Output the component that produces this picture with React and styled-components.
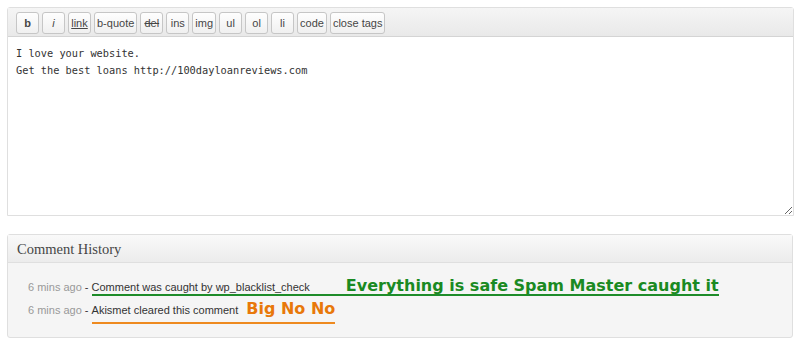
import React from "react";
import styled, { createGlobalStyle } from "styled-components";

const GlobalStyle = createGlobalStyle`
  body {
    margin: 0;
    background: #ffffff;
    font-family: "Liberation Sans", Arial, sans-serif;
  }
`;

const Page = styled.div`
  width: 800px;
  height: 345px;
  padding: 7px 6px 0 7px;
  box-sizing: border-box;
  display: flex;
  flex-direction: column;
  gap: 18px;
`;

const Editor = styled.div`
  border: 1px solid #dfdfdf;
  border-radius: 3px 3px 0 0;
  display: flex;
  flex-direction: column;
  background: #fff;
`;

const Toolbar = styled.div`
  height: 29px;
  box-sizing: border-box;
  padding: 4px 0 0 8px;
  display: flex;
  gap: 3px;
  background: linear-gradient(#f5f5f5, #e9e9e9);
  border-bottom: 1px solid #d4d4d4;
`;

const TagButton = styled.button`
  height: 22px;
  min-width: 23px;
  padding: 0 2px;
  box-sizing: border-box;
  border: 1px solid #c6c6c6;
  border-radius: 3px;
  background: linear-gradient(#fefefe, #f0f0f0);
  color: #464646;
  font-family: "Liberation Sans", Arial, sans-serif;
  font-size: 11px;
  font-weight: ${(p) => (p.$bold ? 700 : 400)};
  font-style: ${(p) => (p.$italic ? "italic" : "normal")};
  text-decoration: ${(p) => p.$deco || "none"};
  line-height: 20px;
  cursor: pointer;
`;

const TextArea = styled.textarea`
  height: 178px;
  box-sizing: border-box;
  border: none;
  outline: none;
  resize: vertical;
  padding: 8px 8px;
  margin: 0;
  font-family: "DejaVu Sans Mono", "Liberation Mono", monospace;
  font-size: 10.3px;
  line-height: 17px;
  color: #333;
  background: #fff;
`;

const HistoryBox = styled.div`
  width: 786px;
  height: 104px;
  box-sizing: border-box;
  border: 1px solid #dfdfdf;
  border-radius: 3px;
  background: #f5f5f5;
  display: flex;
  flex-direction: column;
`;

const HistoryHeader = styled.div`
  height: 28px;
  box-sizing: border-box;
  padding: 6px 0 0 9px;
  background: linear-gradient(#f9f9f9, #ececec);
  border-bottom: 1px solid #dfdfdf;
  font-family: "Liberation Serif", Georgia, serif;
  font-size: 14.5px;
  color: #464646;
`;

const HistoryList = styled.div`
  padding: 16px 0 0 20px;
  display: flex;
  flex-direction: column;
  gap: 6px;
`;

const Row = styled.div`
  display: flex;
  align-items: baseline;
  font-size: 11px;
  color: #333;
  white-space: nowrap;
`;

const Time = styled.span`
  color: #999;
`;

const Marked = styled.span`
  display: inline-flex;
  align-items: baseline;
  border-bottom: 2px solid ${(p) => p.$color};
  padding-bottom: ${(p) => p.$drop}px;
  margin-left: 3px;
`;

const Note = styled.span`
  margin-left: ${(p) => p.$gap}px;
  font-family: "DejaVu Sans", Verdana, sans-serif;
  font-weight: 700;
  font-size: ${(p) => p.$size}px;
  line-height: 13px;
  color: ${(p) => p.$color};
`;

const tags = [
  { label: "b", bold: true },
  { label: "i", italic: true },
  { label: "link", deco: "underline" },
  { label: "b-quote" },
  { label: "del", deco: "line-through" },
  { label: "ins" },
  { label: "img" },
  { label: "ul" },
  { label: "ol" },
  { label: "li" },
  { label: "code" },
  { label: "close tags" },
];

export default function App() {
  return (
    <>
      <GlobalStyle />
      <Page>
        <Editor>
          <Toolbar>
            {tags.map((t) => (
              <TagButton
                key={t.label}
                $bold={t.bold}
                $italic={t.italic}
                $deco={t.deco}
              >
                {t.label}
              </TagButton>
            ))}
          </Toolbar>
          <TextArea
            defaultValue={"I love your website.\nGet the best loans http://100dayloanreviews.com"}
          />
        </Editor>

        <HistoryBox>
          <HistoryHeader>Comment History</HistoryHeader>
          <HistoryList>
            <Row>
              <Time>6 mins ago</Time>&nbsp;-
              <Marked $color="#1e8c2a" $drop={1}>
                Comment was caught by wp_blacklist_check
                <Note $gap={36} $size={16} $color="#1a8a22">
                  Everything is safe Spam Master caught it
                </Note>
              </Marked>
            </Row>
            <Row>
              <Time>6 mins ago</Time>&nbsp;-
              <Marked $color="#ee8a20" $drop={6}>
                Akismet cleared this comment
                <Note $gap={8} $size={16} $color="#e8780a">
                  Big No No
                </Note>
              </Marked>
            </Row>
          </HistoryList>
        </HistoryBox>
      </Page>
    </>
  );
}
